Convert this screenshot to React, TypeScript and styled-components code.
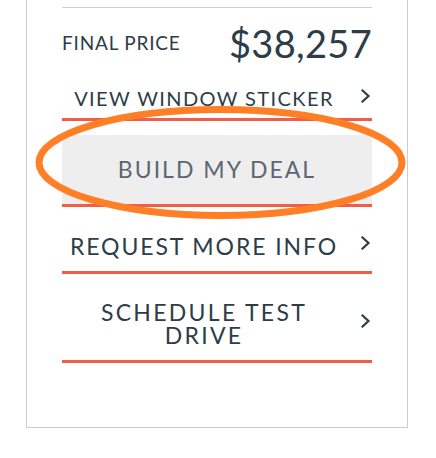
import React from "react";
import styled, { createGlobalStyle } from "styled-components";

const Global = createGlobalStyle`
  html, body { margin: 0; padding: 0; background: #ffffff; }
  body { font-family: Lato, "Open Sans", Arial, sans-serif; }
`;

const Card = styled.div`
  position: relative;
  box-sizing: border-box;
  margin-left: 26px;
  width: 382px;
  border: 1px solid #cccccc;
  border-top: none;
  padding: 7px 35px 64px 35px;
  display: flex;
  flex-direction: column;
`;

const Divider = styled.div`
  height: 1px;
  background: #cfcfcf;
`;

const PriceRow = styled.div`
  height: 70px;
  display: flex;
  align-items: center;
  justify-content: space-between;
  color: #2c3d48;
`;

const PriceLabel = styled.span`
  font-size: 19px;
  line-height: 24px;
  letter-spacing: 0.8px;
`;

const PriceValue = styled.span`
  font-size: 38px;
  line-height: 38px;
  letter-spacing: 0.3px;
`;

const ActionRow = styled.div<{ $h: number; $gap: number; $fill?: boolean }>`
  box-sizing: content-box;
  margin-top: ${(p) => p.$gap}px;
  height: ${(p) => p.$h}px;
  border-bottom: 3px solid #f15d46;
  background: ${(p) => (p.$fill ? "#eeeeee" : "transparent")};
  display: grid;
  grid-template-columns: ${(p) => (p.$fill ? "1fr" : "1fr 26px")};
  align-items: center;
`;

const ActionLabel = styled.span<{ $size: number; $ls: number; $muted?: boolean }>`
  text-align: center;
  font-size: ${(p) => p.$size}px;
  line-height: 23px;
  letter-spacing: ${(p) => p.$ls}px;
  color: ${(p) => (p.$muted ? "#5c6771" : "#2c3d48")};
`;

const ChevronBox = styled.span`
  display: flex;
  justify-content: flex-end;
  padding-right: 1px;
  margin-bottom: 6px;
`;

const Annotation = styled.svg`
  position: absolute;
  left: 8px;
  top: 106px;
  pointer-events: none;
`;

const Chevron = () => (
  <ChevronBox>
    <svg width="10" height="14" viewBox="0 0 10 14">
      <polyline points="1.5,1.5 7.5,7 1.5,12.5" fill="none" stroke="#2c3d48" strokeWidth="2.2" strokeLinecap="square" />
    </svg>
  </ChevronBox>
);

export default function App() {
  return (
    <>
      <Global />
      <Card>
        <Divider />
        <PriceRow>
          <PriceLabel>FINAL PRICE</PriceLabel>
          <PriceValue>$38,257</PriceValue>
        </PriceRow>
        <ActionRow $h={39} $gap={1}>
          <ActionLabel $size={20} $ls={1.4}>VIEW WINDOW STICKER</ActionLabel>
          <Chevron />
        </ActionRow>
        <ActionRow $h={69} $gap={14} $fill>
          <ActionLabel $size={23} $ls={2} $muted>BUILD MY DEAL</ActionLabel>
        </ActionRow>
        <ActionRow $h={50} $gap={14}>
          <ActionLabel $size={23} $ls={1.9}>REQUEST MORE INFO</ActionLabel>
          <Chevron />
        </ActionRow>
        <ActionRow $h={72} $gap={14}>
          <ActionLabel $size={23} $ls={2.3}>SCHEDULE TEST<br />DRIVE</ActionLabel>
          <Chevron />
        </ActionRow>
        <Annotation width="372" height="114" viewBox="0 0 372 114">
          <ellipse cx="185.5" cy="56.5" rx="181.5" ry="53" fill="none" stroke="#ff7f27" strokeWidth="7" />
        </Annotation>
      </Card>
    </>
  );
}
